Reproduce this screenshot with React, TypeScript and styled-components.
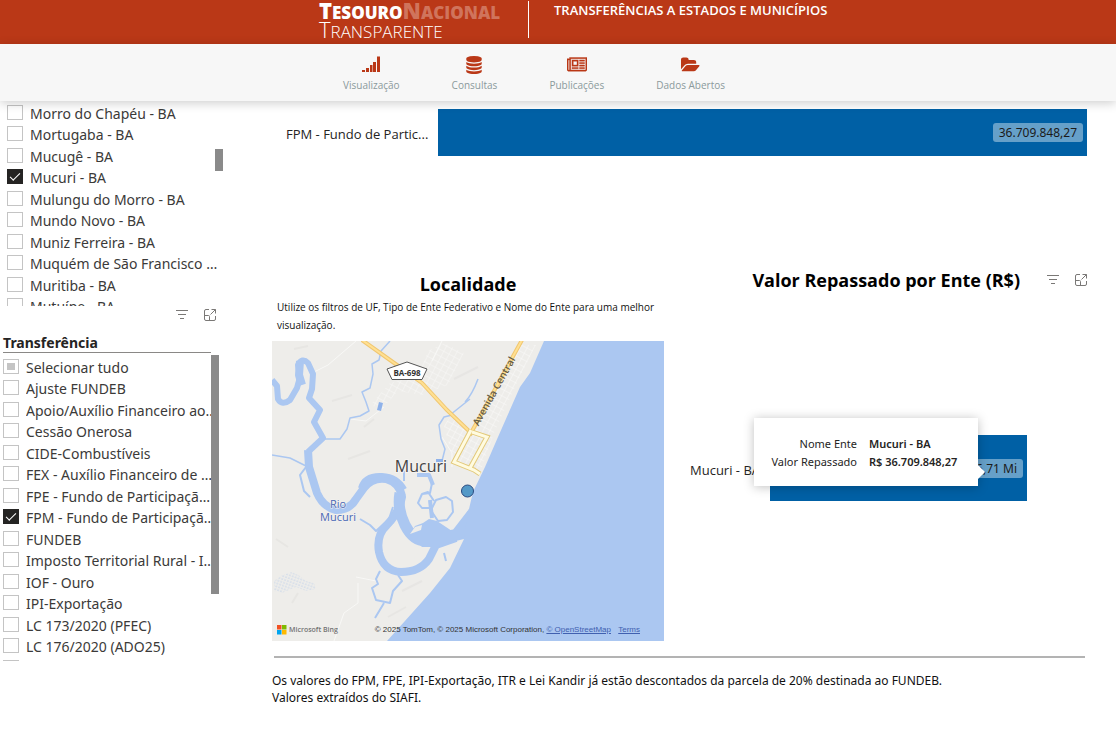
import React from "react";
import styled, { createGlobalStyle } from "styled-components";

const GlobalStyle = createGlobalStyle`
  *, *::before, *::after { box-sizing: border-box; }
  body {
    margin: 0;
    background: #fff;
    color: #252423;
    font-family: "Noto Sans", "Open Sans", sans-serif;
    font-size: 14px;
  }
  h1, h2, h3, p, dl, dd, dt { margin: 0; }
  button { border: 0; padding: 0; background: none; cursor: pointer; }
`;

const Header = styled.header`
  display: flex;
  align-items: flex-start;
  height: 44px;
  padding-left: 319px;
  background: #ba3817;
  color: #fff;
  font-family: "Open Sans", sans-serif;
`;

const Logo = styled.a`
  display: flex;
  flex-direction: column;
  width: 210px;
  height: 37px;
  margin-top: 1px;
  border-right: 1px solid #fff;
  color: #fff;
  text-decoration: none;
  text-transform: uppercase;
  white-space: nowrap;
`;

const LogoLine = styled.span<{ $light?: boolean }>`
  height: 19px;
  font-size: 17px;
  font-weight: ${(p) => (p.$light ? 300 : 800)};
  line-height: 18px;
`;

const LogoFaded = styled.span`
  color: #d0745c;
`;

const Initial = styled.span`
  font-size: 22px;
`;

const PageTitle = styled.h1`
  margin-left: 25px;
  font-size: 13px;
  font-weight: 600;
  line-height: 20px;
  text-transform: uppercase;
  white-space: nowrap;
`;

const Nav = styled.nav`
  position: relative;
  z-index: 2;
  display: flex;
  gap: 52px;
  height: 57px;
  padding: 12px 0 0 343px;
  background: #f7f7f7;
  box-shadow: 0 2px 10px rgba(0, 0, 0, 0.2);
  font-family: "Open Sans", sans-serif;
`;

const NavLink = styled.a`
  display: flex;
  flex-direction: column;
  align-items: center;
  gap: 3px;
  color: #8b9a9c;
  font-size: 10px;
  line-height: 16px;
  text-decoration: none;
  white-space: nowrap;
  svg { display: block; height: 18px; fill: #ba3817; }
`;

const Page = styled.div`
  display: flex;
  align-items: flex-start;
`;

const Sidebar = styled.aside`
  flex: 0 0 240px;
  padding-top: 1px;
`;

const FilterList = styled.fieldset<{ $indent: number; $top: number; $visible: number }>`
  position: relative;
  display: grid;
  grid-auto-rows: 21px 22px;
  align-items: start;
  min-width: 0;
  width: 224px;
  max-height: ${(p) => p.$visible}px;
  margin: 0;
  padding: ${(p) => p.$top}px 0 0 ${(p) => p.$indent}px;
  border: 0;
  overflow: hidden;
`;

const Option = styled.label`
  display: flex;
  align-items: center;
  gap: 7px;
  width: 214px;
  height: 21px;
  color: #3b3a39;
`;

const OptionText = styled.span`
  flex: 1;
  min-width: 0;
  line-height: 21px;
  padding-top: 1px;
  overflow: hidden;
  text-overflow: ellipsis;
  white-space: nowrap;
`;

const Tick = styled.input<{ $partial?: boolean }>`
  appearance: none;
  flex: none;
  width: 16px;
  height: 15px;
  margin: 0;
  border: 1px solid #c4c4c4;
  background: ${(p) =>
    p.$partial ? "linear-gradient(#c4c4c4, #c4c4c4) center / 8px 7px no-repeat #fff" : "#fff"};
  &:checked {
    display: grid;
    place-items: center;
    border-color: #252423;
    background: #252423;
  }
  &:checked::before {
    content: "";
    width: 10px;
    height: 5px;
    border: solid #fff;
    border-width: 0 0 1px 1px;
    transform: translateY(-1px) rotate(-45deg);
  }
`;

const Thumb = styled.span<{ $left: number; $top: number; $size: number }>`
  position: absolute;
  left: ${(p) => p.$left}px;
  top: ${(p) => p.$top}px;
  width: 8px;
  height: ${(p) => p.$size}px;
  background: #8a8a8a;
`;

const Tools = styled.div`
  display: flex;
  gap: 14px;
  button { width: 14px; height: 14px; }
  svg { display: block; fill: none; stroke: #7a7876; }
`;

const SidebarTools = styled(Tools)`
  padding: 2px 0 0 175px;
`;

const FilterTitle = styled.h2`
  width: 208px;
  margin: 12px 0 0 3px;
  border-bottom: 1px solid #8a8886;
  font-size: 14px;
  font-weight: 700;
  line-height: 18px;
`;

const Main = styled.main`
  flex: 1;
  min-width: 0;
  padding: 8px 27px 0 32px;
`;

const BarRow = styled.div`
  display: flex;
  align-items: center;
  padding: 0 2px 0 14px;
`;

const BarLabel = styled.span<{ $width: number }>`
  flex: none;
  width: ${(p) => p.$width}px;
  padding-top: 3px;
  font-family: "Open Sans", sans-serif;
  font-size: 13px;
  line-height: 18px;
  white-space: nowrap;
`;

const Bar = styled.div<{ $height: number }>`
  flex: 1;
  display: flex;
  align-items: center;
  justify-content: flex-end;
  height: ${(p) => p.$height}px;
  padding-right: 4px;
  background: #0060a5;
`;

const BarValue = styled.span`
  padding: 0 6px;
  border-radius: 3px;
  background: #66a0c9;
  color: #1b1a19;
  font-size: 12px;
  line-height: 19px;
`;

const Panels = styled.div`
  display: grid;
  grid-template-columns: 392px minmax(0, 1fr);
  gap: 26px;
  margin-top: 110px;
`;

const MapPanel = styled.section`
  padding-top: 4px;
`;

const PanelTitle = styled.h2`
  color: #000;
  font-family: "Open Sans", sans-serif;
  font-size: 18px;
  font-weight: 700;
  line-height: 28px;
  text-align: center;
  white-space: nowrap;
`;

const MapNote = styled.p`
  padding: 0 5px;
  margin-bottom: 7px;
  color: #111;
  font-family: "Open Sans", sans-serif;
  font-size: 10px;
  line-height: 18px;
`;

const MapFrame = styled.div`
  position: relative;
  height: 300px;
  overflow: hidden;
  background: #abc7f1;
  > svg { display: block; width: 100%; height: 100%; }
`;

const MapCredits = styled.div`
  position: absolute;
  left: 5px;
  right: 24px;
  bottom: 5px;
  display: flex;
  align-items: center;
  justify-content: space-between;
  color: #333;
  font-family: "Liberation Sans", Arial, sans-serif;
  font-size: 8px;
  line-height: 12px;
  white-space: nowrap;
  a { color: #4060b0; }
  a + a { margin-left: 5px; }
`;

const Bing = styled.span`
  display: flex;
  align-items: center;
  gap: 2px;
  color: #737373;
  font-family: "Open Sans", sans-serif;
  font-size: 7px;
  font-weight: 600;
`;

const ValueHead = styled.div`
  display: flex;
  align-items: center;
  justify-content: flex-end;
  gap: 26px;
  padding-right: 1px;
`;

const ValueChart = styled.div`
  position: relative;
  display: flex;
  align-items: center;
  margin-top: 141px;
  padding-right: 62px;
`;

const Tooltip = styled.dl`
  position: absolute;
  top: -17px;
  right: 111px;
  display: grid;
  grid-template-columns: 1fr 92px;
  column-gap: 12px;
  width: 224px;
  padding: 17px 17px 15px 12px;
  background: #fff;
  box-shadow: 0 1px 10px rgba(0, 0, 0, 0.25);
  font-size: 11px;
  line-height: 18px;
  white-space: nowrap;
  dt { text-align: right; }
  dd { font-weight: 600; }
  &::after {
    content: "";
    position: absolute;
    right: -7px;
    bottom: 7px;
    border: 7px solid transparent;
    border-left-color: #fff;
    border-right: 0;
  }
`;

const Footnote = styled.footer`
  margin: 15px 4px 0 0;
  color: #111;
  font-size: 12px;
  line-height: 17px;
  hr { height: 2px; margin: 0 0 14px 2px; border: 0; background: #b3b3b3; }
`;

const cities = [
  "Morro do Chapéu - BA",
  "Mortugaba - BA",
  "Mucugê - BA",
  "Mucuri - BA",
  "Mulungu do Morro - BA",
  "Mundo Novo - BA",
  "Muniz Ferreira - BA",
  "Muquém de São Francisco - BA",
  "Muritiba - BA",
  "Mutuípe - BA",
];

const transfers = [
  "Selecionar tudo",
  "Ajuste FUNDEB",
  "Apoio/Auxílio Financeiro aos Estados",
  "Cessão Onerosa",
  "CIDE-Combustíveis",
  "FEX - Auxílio Financeiro de Fomento",
  "FPE - Fundo de Participação dos Estados",
  "FPM - Fundo de Participação dos Municípios",
  "FUNDEB",
  "Imposto Territorial Rural - ITR",
  "IOF - Ouro",
  "IPI-Exportação",
  "LC 173/2020 (PFEC)",
  "LC 176/2020 (ADO25)",
  "Lei Kandir",
];

function VisualTools() {
  return (
    <>
      <button type="button" aria-label="Filtros">
        <svg width="14" height="14" viewBox="0 0 14 14">
          <path d="M1 2.500h12M3 6.500h8M5 10.500h4" />
        </svg>
      </button>
      <button type="button" aria-label="Modo de foco">
        <svg width="14" height="14" viewBox="0 0 14 14">
          <path d="M6 1.500H3Q1.500 1.500 1.500 3V11Q1.500 12.500 3 12.500H11Q12.500 12.500 12.500 11V8M8.500 1.500h4v4M12.500 1.500L7.500 6.500M1.500 7.500H5.500q1 0 1 1V12.500" />
        </svg>
      </button>
    </>
  );
}

function MapDrawing() {
  return (
    <svg viewBox="0 0 392 300" preserveAspectRatio="xMinYMin slice" role="img" aria-label="Mapa de Mucuri">
      <defs>
        <pattern id="marsh" width="3" height="3" patternUnits="userSpaceOnUse" patternTransform="rotate(20)">
          <circle cx="1" cy="1" r=".6" fill="#9dbce8" />
        </pattern>
        <pattern id="streets" width="6" height="6" patternUnits="userSpaceOnUse" patternTransform="rotate(28)">
          <path d="M0 0H6M0 0V6" stroke="#fff" strokeWidth="1" />
        </pattern>
      </defs>
      <rect width="392" height="300" fill="#abc7f1" />
      <path d="M0 0H272L258 32L248 46L226 96L213 126L201 151L197 168L188 184L180 190L184 200L192 198L178 227L158 252L115 300H0Z" fill="#eeedea" />
      <g fill="none" stroke="#e7e6e3" strokeWidth="2">
        <path d="M22 8l14-3M60 60l20-6M76 118l22-8M182 38l24-12M92 86l10-8M4 198l12 8M20 262l6-10M130 250l20-10M116 276l18-10" />
      </g>
      <path d="M156 10L172 2L192 12L176 44L150 54L126 50L110 68L98 64L118 42L146 34Z" fill="url(#streets)" opacity=".6" />
      <path d="M246 4H264L244 44L222 92L208 132L186 122L178 108L172 84L180 74L200 92L216 60Z" fill="url(#streets)" opacity=".7" />
      <g fill="none" stroke="#f8f8f6" strokeWidth="1">
        <path d="M84 0L56 24L40 32M86 242V262L72 272L62 300M84 236L104 240M78 78L94 80L112 66M170 96L180 112V126M160 20L170 0" />
      </g>
      <g fill="none" stroke="#abc7f1" strokeLinejoin="round">
        <path d="M118 0L109 10L107 19L100 23L101 33L98 47L90 51L94 61L97 70L88 75L78 77L75 88L68 98H51M198 58L178 74M180 74L172 76L167 84L169 98L173 108L170 120M0 114L18 117L34 125M206 38Q200 54 193 61" strokeWidth="1.500" />
        <path d="M0 39L5 45L6 58Q10 65 18 59L25 47L28 36L26 24Q30 16 36 22L41 33L40 48L37 57L48 69L42 81L51 97L36 111" strokeWidth="6" />
        <path d="M28 20L27 34L30 44" strokeWidth="8" />
        <path d="M36 109L37 126L45 152Q51 166 64 169Q78 169 84 158L92 147Q100 136 114 138Q128 142 130 156Q127 172 115 184Q104 194 107 211Q111 230 129 231Q148 231 157 218L164 204L184 197" strokeWidth="8" />
        <path d="M128 152Q125 168 133 184Q141 200 154 200L182 194" strokeWidth="11" />
        <path d="M34 126L28 134L32 150L38 156M132 140L132 130M145 133H156L160 142L158 152L150 153L146 162L150 167L160 167L164 159L174 156L180 160L181 171L175 179L166 180L160 171L159 166M162 180L160 186M150 153L156 151L162 160M88 178L98 184L104 190L117 178L121 166M108 230L104 238L106 243L100 247L104 259L118 262L121 250L130 240L126 234M112 262L103 277M172 212L174 220" strokeWidth="2" />
        <path d="M88 147Q92 133 110 134Q126 135 133 148M145 134L157 134L161 144M158 159L160 177" strokeWidth="4" />
      </g>
      <path d="M111 62L107 61L105 69L109 70ZM110 58L108 61M164 118h7v3h-7z" fill="#8fb2ea" />
      <path d="M138 193L143 185L151 182L157 178L165 180L180 190L197 168L192 196L166 206L150 206Z" fill="#abc7f1" />
      <path d="M138 193L143 186L150 184L149 189Z" fill="#eeedea" />
      <path d="M142 218L146 211L152 210L149 218L144 222Z" fill="#eeedea" />
      <path d="M2 240L10 234L20 231L28 235L34 240L42 242L44 248L34 250L24 246L10 252L2 250Z" fill="url(#marsh)" />
      <g fill="none">
        <path d="M90 -1L125 24L150 42L175 69L199 92L250 -1" stroke="#f0c670" strokeWidth="4" />
        <path d="M90 -1L125 24L150 42L175 69L199 92L250 -1" stroke="#ffe092" strokeWidth="2" />
        <path d="M199 89L182 121L202 129L208 133M200 91L215 96L198 127" stroke="#e3c979" strokeWidth="5" />
        <path d="M199 89L182 121L202 129L208 133M200 91L215 96L198 127" stroke="#fffbe0" strokeWidth="3" />
      </g>
      <path d="M115 28L135 21L155 28L150 38.500H120Z" fill="#fff" stroke="#555" />
      <g fontFamily="Open Sans, sans-serif" textAnchor="middle">
        <text x="135" y="35" fontSize="8" fontWeight="700" fill="#333">BA-698</text>
        <text x="149" y="131" fontSize="16" fill="#444" stroke="#f4f3f1" strokeWidth="2" paintOrder="stroke">Mucuri</text>
        <text fontSize="11" fill="#4a68b4" stroke="#f4f3f1" strokeWidth="1" paintOrder="stroke">
          <tspan x="66" y="167">Rio</tspan>
          <tspan x="66" y="180">Mucuri</tspan>
        </text>
        <text transform="translate(225 52) rotate(-61)" fontSize="10" fontWeight="600" fill="#625a45">Avenida Central</text>
      </g>
      <circle cx="195.500" cy="150" r="6" fill="#5499c7" stroke="#28487f" />
    </svg>
  );
}

export default function App() {
  return (
    <>
      <GlobalStyle />
      <Header>
        <Logo href="#inicio">
          <LogoLine>
            <Initial>T</Initial>esouro<LogoFaded><Initial>N</Initial>acional</LogoFaded>
          </LogoLine>
          <LogoLine $light><Initial>T</Initial>ransparente</LogoLine>
        </Logo>
        <PageTitle>Transferências a Estados e Municípios</PageTitle>
      </Header>
      <Nav>
        <NavLink href="#visualizacao">
          <svg width="18" viewBox="0 0 18 18">
            <path d="M0 14h3v2H0zM4 12h3v4H4zM8 9h2.500v7H8zM11 6h3v10h-3zM15 0.500h3v15.500h-3z" />
          </svg>
          Visualização
        </NavLink>
        <NavLink href="#consultas">
          <svg width="16" viewBox="0 0 1536 1792">
            <path d="M768 768q237 0 443-43t325-127v170q0 69-103 128t-280 93.500-385 34.500-385-34.500-280-93.500-103-128v-170q119 84 325 127t443 43zM768 1536q237 0 443-43t325-127v170q0 69-103 128t-280 93.500-385 34.500-385-34.500-280-93.500-103-128v-170q119 84 325 127t443 43zm0-384q237 0 443-43t325-127v170q0 69-103 128t-280 93.500-385 34.500-385-34.500-280-93.500-103-128v-170q119 84 325 127t443 43zM768 0q208 0 385 34.500t280 93.500 103 128v128q0 69-103 128t-280 93.500-385 34.500-385-34.500-280-93.500-103-128v-128q0-69 103-128t280-93.500 385-34.500z" />
          </svg>
          Consultas
        </NavLink>
        <NavLink href="#publicacoes">
          <svg width="20" viewBox="0 0 2048 1792">
            <path
              stroke="#ba3817"
              strokeWidth="40"
              d="M1024 512h-384v384h384v-384zm128 640v128h-640v-128h640zm0-768v640h-640v-640h640zm640 768v128h-512v-128h512zm0-256v128h-512v-128h512zm0-256v128h-512v-128h512zm0-256v128h-512v-128h512zm-1536 960v-960h-128v960q0 26 19 45t45 19 45-19 19-45zm1664 0v-1088h-1536v1088q0 33-11 64h1483q26 0 45-19t19-45zm128-1216v1216q0 80-56 136t-136 56h-1664q-80 0-136-56t-56-136v-1088h256v-128h1792z"
            />
          </svg>
          Publicações
        </NavLink>
        <NavLink href="#dados">
          <svg width="19" viewBox="0 0 1920 1792">
            <path d="M1879 952q0 31-31 66l-336 396q-43 51-120.500 86.500t-143.500 35.500h-1088q-34 0-60.500-13t-26.500-43q0-31 31-66l336-396q43-51 120.500-86.500t143.500-35.500h1088q34 0 60.500 13t26.500 43zm-343-344v160h-832q-94 0-197 47.500t-164 119.500l-337 396-5 6q0-4-.5-12.500t-.5-12.500v-960q0-92 66-158t158-66h320q92 0 158 66t66 158v32h544q92 0 158 66t66 158z" />
          </svg>
          Dados Abertos
        </NavLink>
      </Nav>
      <Page>
        <Sidebar>
          <FilterList $indent={7} $top={0} $visible={204} aria-label="Nome do Ente">
            {cities.map((name) => (
              <Option key={name}>
                <Tick type="checkbox" defaultChecked={name === "Mucuri - BA"} />
                <OptionText>{name}</OptionText>
              </Option>
            ))}
            <Thumb $left={215} $top={47} $size={22} />
          </FilterList>
          <SidebarTools>
            <VisualTools />
          </SidebarTools>
          <FilterTitle>Transferência</FilterTitle>
          <FilterList $indent={3} $top={3} $visible={308} aria-label="Transferência">
            {transfers.map((name, i) => (
              <Option key={name}>
                <Tick type="checkbox" $partial={i === 0} defaultChecked={name.startsWith("FPM")} />
                <OptionText>{name}</OptionText>
              </Option>
            ))}
            <Thumb $left={211} $top={2} $size={239} />
          </FilterList>
        </Sidebar>
        <Main>
          <BarRow>
            <BarLabel $width={152}>FPM - Fundo de Partic...</BarLabel>
            <Bar $height={47}>
              <BarValue>36.709.848,27</BarValue>
            </Bar>
          </BarRow>
          <Panels>
            <MapPanel>
              <PanelTitle>Localidade</PanelTitle>
              <MapNote>
                Utilize os filtros de UF, Tipo de Ente Federativo e Nome do Ente para uma melhor visualização.
              </MapNote>
              <MapFrame>
                <MapDrawing />
                <MapCredits>
                  <Bing>
                    <svg width="10" height="10" viewBox="0 0 10 10">
                      <path d="M0 0h4.500v4.500H0z" fill="#f25022" />
                      <path d="M5 0h4.500v4.500H5z" fill="#7fba00" />
                      <path d="M0 5h4.500v4.500H0z" fill="#00a4ef" />
                      <path d="M5 5h4.500v4.500H5z" fill="#ffb900" />
                    </svg>
                    Microsoft Bing
                  </Bing>
                  <span>
                    © 2025 TomTom, © 2025 Microsoft Corporation, <a href="#osm">© OpenStreetMap</a>{" "}
                    <a href="#terms">Terms</a>
                  </span>
                </MapCredits>
              </MapFrame>
            </MapPanel>
            <section>
              <ValueHead>
                <PanelTitle>Valor Repassado por Ente (R$)</PanelTitle>
                <Tools>
                  <VisualTools />
                </Tools>
              </ValueHead>
              <ValueChart>
                <BarLabel $width={80}>Mucuri - BA</BarLabel>
                <Bar $height={66}>
                  <BarValue>36,71 Mi</BarValue>
                </Bar>
                <Tooltip>
                  <dt>Nome Ente</dt>
                  <dd>Mucuri - BA</dd>
                  <dt>Valor Repassado</dt>
                  <dd>R$ 36.709.848,27</dd>
                </Tooltip>
              </ValueChart>
            </section>
          </Panels>
          <Footnote>
            <hr />
            <p>
              Os valores do FPM, FPE, IPI-Exportação, ITR e Lei Kandir já estão descontados da parcela de 20%
              destinada ao FUNDEB.
            </p>
            <p>Valores extraídos do SIAFI.</p>
          </Footnote>
        </Main>
      </Page>
    </>
  );
}
